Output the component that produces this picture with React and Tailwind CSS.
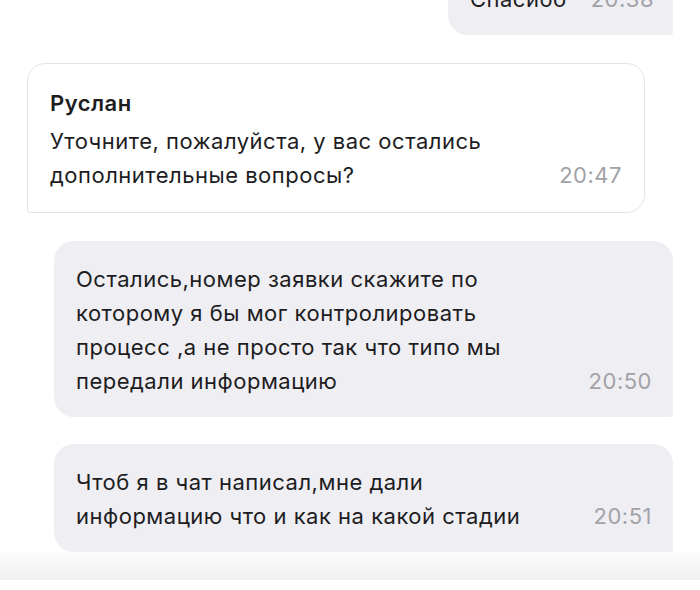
const font = { fontFamily: "Inter, 'Noto Sans', sans-serif" };

function Outgoing({ lines, time, className = "" }) {
  return (
    <div
      className={
        "ml-auto mr-[27px] bg-[#efeef3] rounded-[20px] rounded-br-[3px] pl-[22px] pr-[21px] pt-[21px] pb-[19px] flex items-end justify-between gap-[24px] " +
        className
      }
    >
      <div className="text-[22px] leading-[34px] tracking-[0.5px] text-[#1d1d1f] whitespace-nowrap">
        {lines.map((l, i) => (
          <div key={i}>{l}</div>
        ))}
      </div>
      <div className="text-[22px] leading-[34px] tracking-[0.5px] text-[#a2a2a7] shrink-0">{time}</div>
    </div>
  );
}

export default function App() {
  return (
    <div className="w-[700px] h-[590px] overflow-hidden bg-white" style={font}>
      <div className="-mt-[39px] flex flex-col">
        <Outgoing lines={["Спасибо"]} time="20:38" className="w-[225px]" />

        <div className="mt-[28px] ml-[27px] w-[618px] border border-[#e3e3e8] rounded-[18px] rounded-bl-[3px] bg-white pl-[22px] pr-[22px] pt-[23px] pb-[20px]">
          <div className="text-[22px] leading-[32px] tracking-[0.5px] font-semibold text-[#1d1d1f]">Руслан</div>
          <div className="mt-[5px] flex items-end justify-between gap-[24px]">
            <div className="text-[22px] leading-[34px] tracking-[0.5px] text-[#1d1d1f] whitespace-nowrap">
              <div>Уточните, пожалуйста, у вас остались</div>
              <div>дополнительные вопросы?</div>
            </div>
            <div className="text-[22px] leading-[34px] tracking-[0.5px] text-[#a2a2a7] shrink-0">20:47</div>
          </div>
        </div>

        <Outgoing
          className="mt-[28px] w-[619px]"
          time="20:50"
          lines={[
            "Остались,номер заявки скажите по",
            "которому я бы мог контролировать",
            "процесс ,а не просто так что типо мы",
            "передали информацию",
          ]}
        />

        <Outgoing
          className="mt-[27px] w-[619px]"
          time="20:51"
          lines={["Чтоб я в чат написал,мне дали", "информацию что и как на какой стадии"]}
        />

        <div className="h-[28px] bg-gradient-to-b from-[#fdfdfd] to-[#f0f0f0]" />
        <div className="h-[20px] bg-white" />
      </div>
    </div>
  );
}
